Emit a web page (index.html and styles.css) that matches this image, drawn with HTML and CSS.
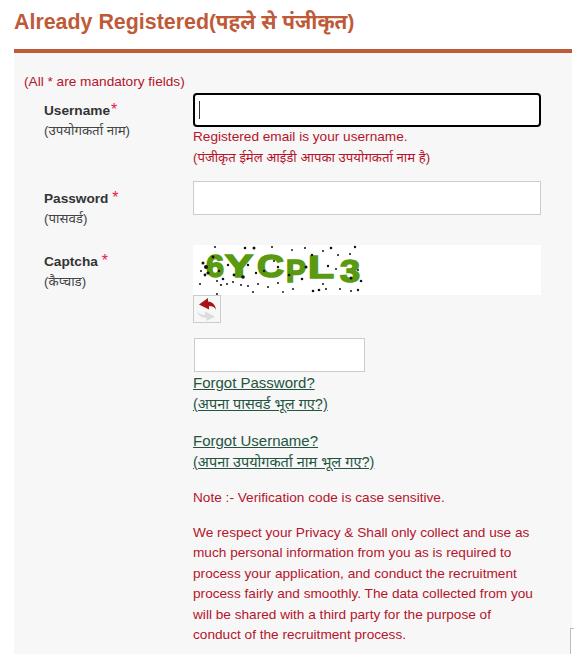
FILE: index.html
```html
<!DOCTYPE html>
<html lang="hi">
<head>
<meta charset="utf-8">
<title>Already Registered</title>
<link rel="stylesheet" href="styles.css">
</head>
<body>
<main class="page">
  <h1 class="title">Already Registered<span class="title-hi">(पहले से पंजीकृत)</span></h1>
  <section class="panel">
    <p class="mandatory">(All * are mandatory fields)</p>
    <div class="row row-user">
      <div class="label"><b>Username</b><span class="star star-tight">*</span><small>(उपयोगकर्ता नाम)</small></div>
      <div class="field">
        <div class="input input-focus"><span class="caret"></span></div>
        <p class="hint">Registered email is your username.</p>
        <p class="hint-hi">(पंजीकृत ईमेल आईडी आपका उपयोगकर्ता नाम है)</p>
      </div>
    </div>
    <div class="row row-pass">
      <div class="label"><b>Password</b> <span class="star">*</span><small>(पासवर्ड)</small></div>
      <div class="field"><div class="input"></div></div>
    </div>
    <div class="row row-captcha">
      <div class="label"><b>Captcha</b> <span class="star">*</span><small>(कैप्चाड)</small></div>
      <div class="field">
        <div class="captcha">
          <svg class="captcha-img" width="172" height="50" viewBox="0 0 172 50">
            <rect width="172" height="50" fill="#fff"/>
            <g fill="#5a9a10" stroke="#5a9a10" stroke-width="1.6" font-family="'Liberation Sans',sans-serif" font-size="32" font-weight="700">
              <text x="13" y="32" textLength="18" lengthAdjust="spacingAndGlyphs">6</text>
              <text x="32" y="32" textLength="28" lengthAdjust="spacingAndGlyphs">Y</text>
              <text x="64" y="32" textLength="27" lengthAdjust="spacingAndGlyphs">C</text>
              <text x="93" y="37" textLength="20" lengthAdjust="spacingAndGlyphs">P</text>
              <text x="115" y="33" textLength="26" lengthAdjust="spacingAndGlyphs">L</text>
              <text x="147" y="37" textLength="20" lengthAdjust="spacingAndGlyphs">3</text>
            </g>
            <g fill="#111">
              <circle cx="22" cy="2" r="1"/><circle cx="52" cy="3" r="1.3"/><circle cx="61" cy="3" r="1.5"/><circle cx="79" cy="2" r="1"/><circle cx="81" cy="16" r="1"/><circle cx="99" cy="5" r=".9"/><circle cx="112" cy="3" r="1"/><circle cx="119" cy="10" r="1.2"/><circle cx="130" cy="6" r="1"/><circle cx="138" cy="3" r="1.3"/><circle cx="145" cy="10" r="1"/><circle cx="157" cy="9" r="1"/><circle cx="162" cy="2" r="1.2"/>
              <circle cx="8" cy="26" r="1"/><circle cx="10" cy="18" r="1.5"/><circle cx="13" cy="22" r="2"/><circle cx="15" cy="28" r="1.6"/><circle cx="12" cy="30" r="1.4"/><circle cx="20" cy="12" r="1.4"/><circle cx="26" cy="26" r="1.2"/><circle cx="30" cy="34" r="1.3"/><circle cx="35" cy="20" r="1.2"/><circle cx="41" cy="30" r="1.4"/><circle cx="50" cy="32" r="1.8"/><circle cx="55" cy="20" r="1.2"/><circle cx="63" cy="28" r="1.2"/><circle cx="71" cy="26" r="1.2"/><circle cx="85" cy="22" r="1.2"/><circle cx="96" cy="30" r="1.3"/><circle cx="109" cy="34" r="1.3"/><circle cx="113" cy="22" r="1.5"/><circle cx="135" cy="21" r="1.2"/><circle cx="143" cy="24" r="1"/><circle cx="158" cy="33" r="1.5"/><circle cx="168" cy="36" r="1.3"/><circle cx="165" cy="25" r="1"/>
              <circle cx="7" cy="39" r="1"/><circle cx="24" cy="36" r="1"/><circle cx="28" cy="40" r="1.1"/><circle cx="34" cy="39" r="1"/><circle cx="40" cy="37" r="1"/><circle cx="48" cy="40" r="1"/><circle cx="55" cy="41" r="1"/><circle cx="65" cy="39" r="1"/><circle cx="75" cy="42" r="1"/><circle cx="85" cy="38" r="1"/><circle cx="100" cy="44" r="1"/><circle cx="120" cy="46" r="1.3"/><circle cx="126" cy="45" r="1.3"/><circle cx="133" cy="44" r="1"/><circle cx="130" cy="39" r="1"/><circle cx="147" cy="44" r="1"/><circle cx="158" cy="46" r="1"/><circle cx="165" cy="45" r="1.2"/><circle cx="24" cy="49" r="1"/><circle cx="60" cy="47" r="1"/><circle cx="90" cy="47" r=".9"/>
            </g>
          </svg>
        </div>
        <button class="refresh" type="button" aria-label="Refresh captcha">
          <svg width="24" height="24" viewBox="0 0 24 24">
            <path d="M21 13c-1-2.500-3.300-4-7-4v3.500L4 7.500 13 1v3.500c4.500.3 7.500 3.500 8 8.500z" fill="#a81414"/>
            <path d="M2 13.500c1.200 3 3.800 4.400 8 4.500v-3.500l10 5-8.500 4.500v-3c-4.800 0-9-3-9.500-7.500z" fill="#dcdcdc"/>
          </svg>
        </button>
        <div class="input input-code"></div>
        <p class="link-block"><a href="#" class="link">Forgot Password?</a><br><a href="#" class="link link-hi">(अपना पासवर्ड भूल गए?)</a></p>
        <p class="link-block"><a href="#" class="link">Forgot Username?</a><br><a href="#" class="link link-hi">(अपना उपयोगकर्ता नाम भूल गए?)</a></p>
        <p class="note note-first">Note :- Verification code is case sensitive.</p>
        <p class="note">We respect your Privacy &amp; Shall only collect and use as much personal information from you as is required to process your application, and conduct the recruitment process fairly and smoothly. The data collected from you will be shared with a third party for the purpose of conduct of the recruitment process.</p>
      </div>
    </div>
  </section>
  <span class="edge-box"></span>
</main>
</body>
</html>
```
FILE: styles.css
```css
html, body {
  margin: 0;
  padding: 0;
  height: 654px;
  overflow: hidden;
  background: #fff;
}
body {
  font-family: "Liberation Sans", Arial, "Noto Sans", sans-serif;
  font-size: 13.65px;
  color: #333;
}
.page {
  position: relative;
  height: 654px;
  padding-left: 14px;
  padding-right: 2px;
  box-sizing: border-box;
  overflow: hidden;
}
.title {
  margin: 0;
  padding-top: 8px;
  height: 49px;
  box-sizing: border-box;
  font-size: 21.4px;
  line-height: 28px;
  font-weight: 700;
  color: #bf5a38;
}
.title-hi { font-size: 20.7px; }
.panel {
  border-top: 4px solid #bf5a38;
  background: #f7f7f7;
  padding: 20px 10px 0;
  height: 605px;
  box-sizing: border-box;
}
.mandatory {
  margin: 0 0 2px;
  height: 18px;
  line-height: 18px;
  color: #b5142b;
}
.row {
  display: grid;
  grid-template-columns: 169px 348px;
}
.row-user { height: 88px; }
.row-pass { height: 64px; }
.row-user .label { padding-top: 7px; }
.row-pass .label { padding-top: 7px; }
.row-captcha .label { padding-top: 6px; }
.label {
  padding-left: 20px;
  line-height: 20px;
}
.label b { font-weight: 700; color: #333; }
.label small {
  display: block;
  font-size: 13.3px;
  line-height: 20px;
  color: #444;
}
.star { color: #e8174a; font-size: 16px; }
.star-tight { margin-left: 1px; }
.input {
  height: 34px;
  box-sizing: border-box;
  background: #fff;
  border: 1px solid #ccc;
}
.input-focus {
  border: 2px solid #000;
  border-radius: 4px;
  display: flex;
  align-items: center;
  padding-left: 4px;
}
.caret {
  width: 1px;
  height: 18px;
  background: #333;
}
.hint {
  margin: 0;
  padding-top: 1px;
  line-height: 17px;
  color: #b5142b;
}
.hint-hi {
  margin: 0;
  padding-top: 3px;
  font-size: 13.2px;
  line-height: 20px;
  color: #b5142b;
}
.captcha {
  height: 50px;
  background: #fff;
}
.captcha-img { display: block; }
.refresh {
  display: block;
  width: 28px;
  height: 28px;
  padding: 1px;
  margin: 0;
  background: #f7f7f7;
  border: 1px solid #ccc;
  box-sizing: border-box;
}
.refresh svg { display: block; }
.input-code {
  width: 171px;
  margin: 15px 0 0 1px;
}
.link-block {
  margin: 0 0 15px;
  line-height: 21px;
}
.link { color: #24543f; text-decoration: underline; font-size: 15px; }
.link-hi { font-size: 14.5px; }
.note {
  margin: 0;
  line-height: 20.5px;
  color: #b5142b;
}
.note-first {
  margin-top: 2px;
  margin-bottom: 14px;
}
.edge-box {
  position: absolute;
  right: -8px;
  top: 628px;
  width: 10px;
  height: 40px;
  background: #fff;
  border: 1px solid #bbb;
}
```
